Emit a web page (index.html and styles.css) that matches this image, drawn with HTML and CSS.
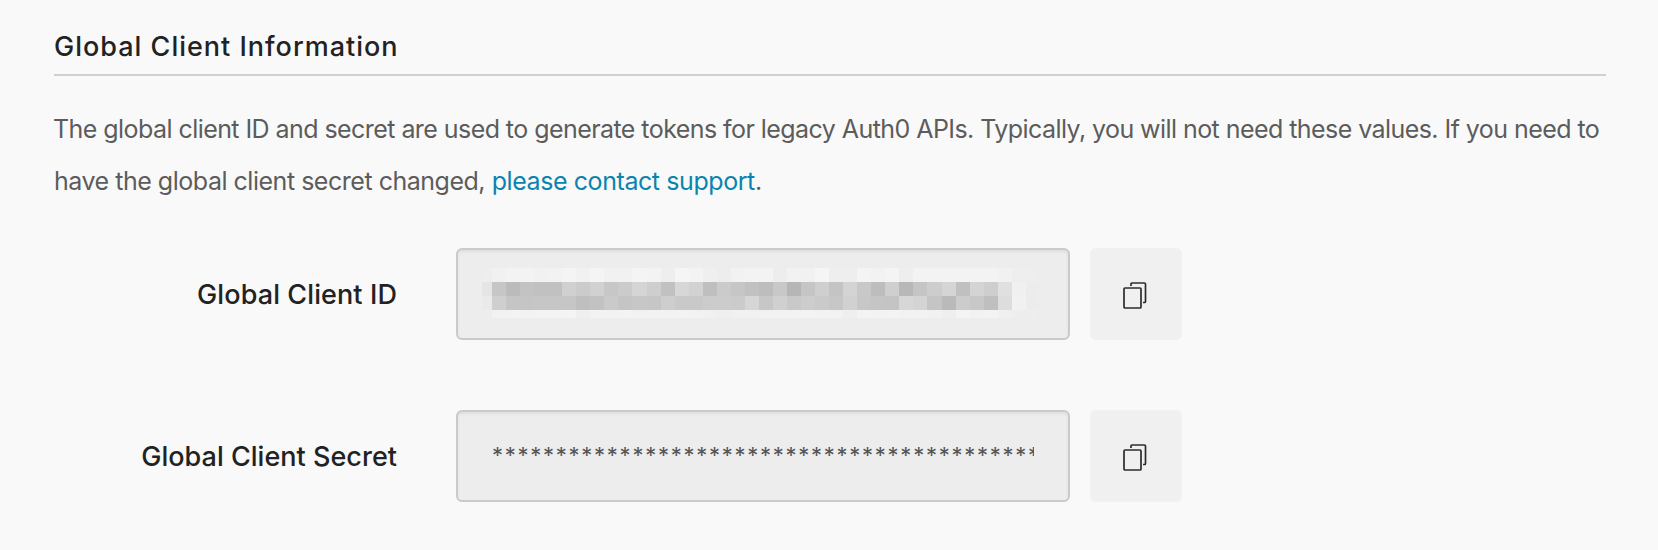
FILE: index.html
```html
<!DOCTYPE html>
<html lang="en">
<head>
<meta charset="utf-8">
<title>Global Client Information</title>
<link rel="stylesheet" href="styles.css">
</head>
<body>
<main class="section">
  <h2 class="section-title">Global Client Information</h2>
  <p class="description"><span class="line line-first">The global client ID and secret are used to generate tokens for legacy Auth0 APIs. Typically, you will not need these values. If you need to</span> <span class="line">have the global client secret changed, <a class="link">please contact support</a>.</span></p>
  <div class="field">
    <span class="label label-id">Global Client ID</span>
    <div class="input"><div class="mosaic" id="mosaic"></div></div>
    <button class="copy" aria-label="Copy"><svg class="icon" viewBox="0 0 24 27"><rect x="1" y="6" width="17" height="20" rx="1"/><path d="M8 4V2Q8 1 9 1H21.500Q22.500 1 22.500 2V19.500Q22.500 20.500 21.500 20.500H20"/></svg></button>
  </div>
  <div class="field">
    <span class="label label-secret">Global Client Secret</span>
    <div class="input"><span class="secret">*******************************************</span></div>
    <button class="copy" aria-label="Copy"><svg class="icon" viewBox="0 0 24 27"><rect x="1" y="6" width="17" height="20" rx="1"/><path d="M8 4V2Q8 1 9 1H21.500Q22.500 1 22.500 2V19.500Q22.500 20.500 21.500 20.500H20"/></svg></button>
  </div>
</main>
<script src="mosaic.js"></script>
</body>
</html>
```
FILE: styles.css
```css
* { box-sizing: border-box; }
body {
  margin: 0;
  background: #f9f9f9;
  font-family: Inter, "Liberation Sans", sans-serif;
  color: #222;
}
.section { padding: 27px 52px 0 53px; }
.section-title {
  margin: 0 0 0 1px;
  height: 49px;
  border-bottom: 2px solid #d0d0d0;
  font-size: 27px;
  line-height: 39px;
  font-weight: 500;
  letter-spacing: 1px;
}
.description {
  margin: 27px 0 41px;
  height: 104px;
  color: #5c5c5c;
  font-size: 25px;
  line-height: 52px;
  letter-spacing: -0.48px;
}
.line { display: block; white-space: nowrap; }
.line-first { letter-spacing: -0.56px; }
.line:not(.line-first) { padding-left: 1px; }
.link { color: #0a84ae; letter-spacing: -0.42px; }
.field { display: flex; align-items: center; height: 92px; margin-bottom: 70px; }
.label {
  width: 344px;
  margin-right: 59px;
  padding-top: 2px;
  text-align: right;
  font-size: 27px;
  line-height: 40px;
  font-weight: 500;
  white-space: nowrap;
}
.label-id { letter-spacing: 0.1px; }
.label-secret { letter-spacing: 0.02px; }
.input {
  width: 614px;
  height: 92px;
  padding: 18px 34px 0;
  border: 2px solid #cacaca;
  border-radius: 6px;
  background: #ededed;
  box-shadow: inset 0 2px 3px rgba(0, 0, 0, 0.06);
}
.secret {
  display: block;
  overflow: hidden;
  height: 52px;
  color: #555;
  font-size: 22px;
  line-height: 50px;
  letter-spacing: 1.74px;
  white-space: nowrap;
}
.mosaic {
  display: grid;
  grid-template-columns: 10px repeat(36, 14.05px) 14px 14px 11px;
  grid-template-rows: 14px 14px 14px 8px;
  width: 555px;
  margin-left: -10px;
}
.copy {
  display: flex;
  align-items: center;
  justify-content: center;
  width: 92px;
  height: 92px;
  margin-left: 20px;
  padding: 2px 3px 0 0;
  border: 0;
  border-radius: 6px;
  background: #f0f0f0;
}
.icon { width: 24px; height: 27px; fill: none; stroke: #2c2c2c; stroke-width: 1.7; }
```
FILE: mosaic.js
```js
// Grey levels of the obscured value, one string per row of cells.
const rows = [
  "ee f1 f3 f3 f1 f2 f4 f1 f4 f1 f1 f4 f3 ee f5 f3 ef ed f2 f3 f3 ed f2 f1 f5 ee ee f4 f2 f4 ee f3 f3 f3 f3 f3 f3 f1 ee ee",
  "e5 c6 bb c3 c1 c1 d0 cb d1 c7 cb d5 ce c1 d7 d2 bf cb c6 c1 bd c8 b6 c5 cf c4 d4 c8 bd cf b8 c5 cd d5 c0 d4 ce e0 f0 ec",
  "ea cf c5 c5 c6 c6 c6 bf c2 ca c5 c7 c6 ce c9 c9 cc cc cb d6 c7 d0 c9 cd ca c7 d1 c7 c5 c4 d7 d4 c5 ba cc c8 bf dd f1 ec",
  "ee f2 f3 f2 f3 f3 f4 ef f2 f2 f3 f2 f2 f2 f3 f2 f1 ef f1 f1 f2 f2 f2 f3 f2 f2 ef f3 f2 f3 f2 f2 f1 ef f4 f2 f3 f0 ee ee"
];
const mosaic = document.getElementById("mosaic");
rows.forEach(row => row.split(" ").forEach(shade => {
  const cell = document.createElement("i");
  cell.style.background = "#" + shade.repeat(3);
  mosaic.appendChild(cell);
}));
```
